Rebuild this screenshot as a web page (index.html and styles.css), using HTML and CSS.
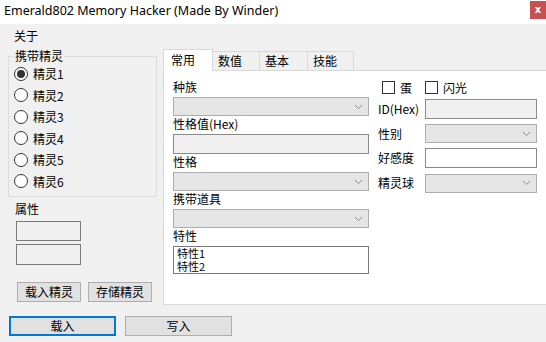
FILE: index.html
```html
<html>
	<head>
		<meta charset="utf-8" />
		<title>Emerald802 Memory Hacker</title>
		<link rel="stylesheet" href="styles.css">
	</head>
	<body>
		<div class="window">
			<div class="titlebar">
				<span class="title">Emerald802 Memory Hacker (Made By Winder)</span>
				<span class="close">x</span>
			</div>
			<div class="menubar"><span class="menu_item">关于</span></div>
			<div class="main">
				<!--left side-->
				<div class="side">
					<fieldset class="group">
						<legend>携带精灵</legend>
						<div class="radio"><span class="circle on"></span>精灵1</div>
						<div class="radio"><span class="circle"></span>精灵2</div>
						<div class="radio"><span class="circle"></span>精灵3</div>
						<div class="radio"><span class="circle"></span>精灵4</div>
						<div class="radio"><span class="circle"></span>精灵5</div>
						<div class="radio"><span class="circle"></span>精灵6</div>
					</fieldset>
					<div class="attr_label">属性</div>
					<div class="attr_box"></div>
					<div class="attr_box second"></div>
					<div class="side_buttons">
						<div class="btn small">载入精灵</div>
						<div class="btn small">存储精灵</div>
					</div>
				</div>
				<!--tabs-->
				<div class="tabs">
					<div class="tab_strip">
						<div class="tab active">常用</div>
						<div class="tab t2">数值</div>
						<div class="tab t3">基本</div>
						<div class="tab t4">技能</div>
					</div>
					<div class="tab_panel">
						<div class="col_left">
							<div class="field_label">种族</div>
							<div class="combo"><svg width="9" height="6" viewBox="0 0 9 6"><polyline points="1,1 4.5,4.5 8,1" fill="none" stroke="#8a8a8a" stroke-width="1"/></svg></div>
							<div class="field_label">性格值(Hex)</div>
							<div class="textbox"></div>
							<div class="field_label">性格</div>
							<div class="combo"><svg width="9" height="6" viewBox="0 0 9 6"><polyline points="1,1 4.5,4.5 8,1" fill="none" stroke="#8a8a8a" stroke-width="1"/></svg></div>
							<div class="field_label">携带道具</div>
							<div class="combo"><svg width="9" height="6" viewBox="0 0 9 6"><polyline points="1,1 4.5,4.5 8,1" fill="none" stroke="#8a8a8a" stroke-width="1"/></svg></div>
							<div class="field_label">特性</div>
							<div class="listbox"><div>特性1</div><div>特性2</div></div>
						</div>
						<div class="col_right">
							<div class="check first"><span class="box"></span>蛋</div>
							<div class="check"><span class="box"></span>闪光</div>
							<div class="row_label">ID(Hex)</div>
							<div class="textbox"></div>
							<div class="row_label">性别</div>
							<div class="combo"><svg width="9" height="6" viewBox="0 0 9 6"><polyline points="1,1 4.5,4.5 8,1" fill="none" stroke="#8a8a8a" stroke-width="1"/></svg></div>
							<div class="row_label">好感度</div>
							<div class="textbox white"></div>
							<div class="row_label">精灵球</div>
							<div class="combo"><svg width="9" height="6" viewBox="0 0 9 6"><polyline points="1,1 4.5,4.5 8,1" fill="none" stroke="#8a8a8a" stroke-width="1"/></svg></div>
						</div>
					</div>
				</div>
			</div>
			<div class="bottom">
				<div class="btn big primary">载入</div>
				<div class="btn big">写入</div>
			</div>
		</div>
	</body>
</html>
```

FILE: styles.css
```css
* {margin: 0; padding: 0; box-sizing: border-box;}
body {width: 546px; height: 342px; overflow: hidden; background: #f0f0f0; font-family: "Noto Sans CJK SC", "Noto Sans", sans-serif; font-size: 12px; color: #000;}
/*window*/
.window {width: 546px; height: 342px; display: flex; flex-direction: column;}
.titlebar {height: 24px; background: #fff; display: flex; justify-content: space-between; align-items: flex-start; padding-left: 4px;}
.title {font-family: "Noto Sans", sans-serif; font-size: 12.5px; line-height: 22px;}
.close {width: 16px; height: 18px; margin-top: 1px; background: #c75050; color: #fff; font-family: "DejaVu Sans", sans-serif; font-weight: bold; font-size: 10px; line-height: 17px; text-align: center;}
.menubar {height: 21px; padding: 4px 0 0 14px; line-height: 16px;}
.main {height: 260px; display: flex;}
/*side*/
.side {width: 163px; flex: none;}
.group {margin: 4px 0 0 8px; width: 149px; border: 1px solid #dcdcdc; padding: 0 0 4px 5px;}
.group legend {line-height: 14px; padding: 0 1px; margin-left: 0;}
.radio {height: 21.5px; display: flex; align-items: center;}
.circle {width: 14px; height: 14px; border: 1px solid #333; border-radius: 50%; background: #fff; margin-right: 5px; display: flex; align-items: center; justify-content: center;}
.circle.on:after {content: ""; width: 8px; height: 8px; border-radius: 50%; background: #333;}
.attr_label {margin: 5px 0 0 15px; line-height: 14px;}
.attr_box {margin: 5px 0 0 16px; width: 65px; height: 20px; border: 1px solid #7a7a7a; background: #f0f0f0;}
.attr_box.second {margin-top: 3px; height: 21px;}
.side_buttons {display: flex; gap: 7px; margin: 17px 0 0 17px;}
.btn {height: 20px; background: #e1e1e1; border: 1px solid #adadad; display: flex; align-items: center; justify-content: center; line-height: 14px;}
.btn.small {width: 64px;}
/*tabs*/
.tabs {flex: 1; display: flex; flex-direction: column;}
.tab_strip {height: 25px; display: flex; align-items: flex-end;}
.tab {height: 19px; border: 1px solid #d9d9d9; border-bottom: none; border-left: none; padding-left: 5px; line-height: 18px; background: #f0f0f0;}
.tab.active {height: 22px; margin-bottom: -1px; position: relative; width: 50px; border-left: 1px solid #d9d9d9; background: #fff; padding-left: 7px; line-height: 20px;}
.tab.t2 {width: 47px;}
.tab.t3 {width: 48px;}
.tab.t4 {width: 46px;}
.tab_panel {flex: 1; background: #fff; border: 1px solid #d9d9d9; border-right: none; display: flex;}
/*fields*/
.col_left {width: 205px; padding: 8px 0 0 9px;}
.field_label {line-height: 15px; margin-bottom: 3px;}
.combo {height: 19px; width: 196px; background: #e5e5e5; border: 1px solid #adadad; display: flex; align-items: center; justify-content: flex-end; padding-right: 5px;}
.textbox {height: 20px; width: 196px; background: #f0f0f0; border: 1px solid #8a8a8a;}
.textbox.white {background: #fff;}
.listbox {height: 28px; width: 196px; border: 1px solid #7a7a7a; padding: 0 0 0 3px; font-size: 11px; line-height: 13px;}
.col_right {padding: 10px 0 0 9px; display: grid; grid-template-columns: 47px 112px; grid-template-rows: 13px repeat(4, 20px); row-gap: 4.75px; align-items: center;}
.col_right .combo, .col_right .textbox {width: 112px;}
.row_label {line-height: 14px; white-space: nowrap;}
.check {display: flex; align-items: center; line-height: 13px;}
.check.first {padding-left: 4px;}
.box {width: 13px; height: 13px; border: 1px solid #333; background: #fff; margin-right: 5px;}
/*bottom*/
.bottom {height: 37px; display: flex; gap: 9px; padding: 11px 0 0 9px;}
.btn.big {width: 107px; height: 20px;}
.btn.primary {border: 2px solid #0078d7;}
```
